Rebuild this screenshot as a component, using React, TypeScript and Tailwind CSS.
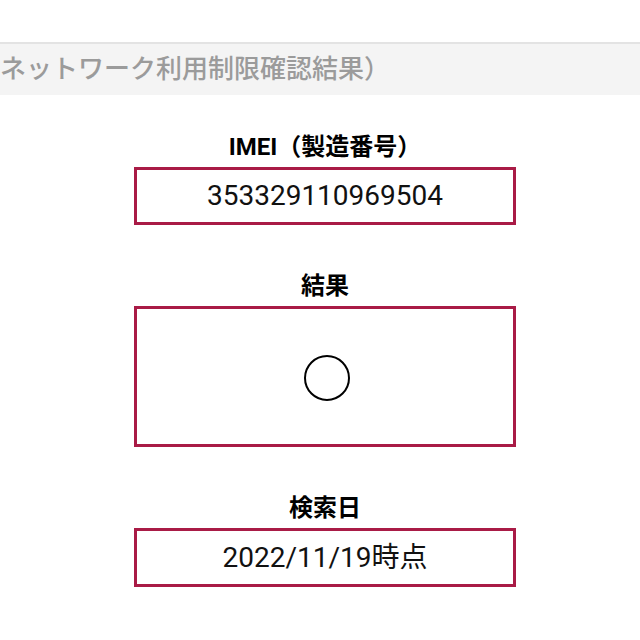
import React from "react";

const font = { fontFamily: 'Roboto, "Noto Sans CJK JP", sans-serif' };

function Label({ children, first }: { children: React.ReactNode; first?: boolean }) {
  return (
    <div
      className={`text-[24px] leading-[28px] font-bold text-black ${first ? "" : "mt-[47px]"}`}
    >
      {children}
    </div>
  );
}

export default function App() {
  return (
    <div className="w-[640px] h-[640px] bg-white overflow-hidden" style={font}>
      <div className="h-[42px] bg-white" />
      <div className="h-[2px] bg-[#e3e3e3]" />
      <div className="h-[51px] bg-[#f4f4f4] flex items-center">
        <span className="whitespace-nowrap text-[26px] font-medium text-[#9b9b9b]">
          ネットワーク利用制限確認結果）
        </span>
      </div>
      <div className="flex flex-col items-center pl-[10px] pt-[38px]">
        <Label first>IMEI（製造番号）</Label>
        <div className="mt-[6px] w-[382px] h-[58px] border-[3px] border-[#a91b46] flex items-center justify-center text-[28px] text-[#111]">
          353329110969504
        </div>
        <Label>結果</Label>
        <div className="mt-[6px] w-[382px] h-[141px] border-[3px] border-[#a91b46] flex items-center justify-center">
          <div className="w-[46px] h-[46px] rounded-full border-[2.5px] border-black ml-[4px] mt-[3px]" />
        </div>
        <Label>検索日</Label>
        <div className="mt-[6px] w-[382px] h-[59px] border-[3px] border-[#a91b46] flex items-center justify-center text-[28px] text-[#111]">
          2022/11/19時点
        </div>
      </div>
    </div>
  );
}
